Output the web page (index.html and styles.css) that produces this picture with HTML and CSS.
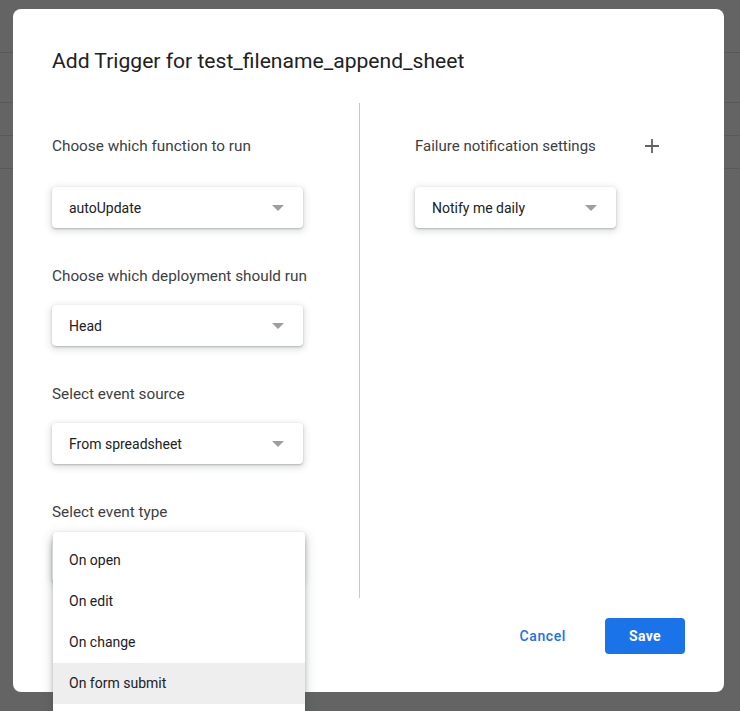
FILE: index.html
```html
<!DOCTYPE html>
<html>
<head>
<meta charset="utf-8">
<link rel="stylesheet" href="styles.css">
</head>
<body>
<div class="page">
  <div class="dialog">
    <h1 class="title">Add Trigger for test_filename_append_sheet</h1>
    <div class="body">
      <div class="col col-left">
        <div class="label-row first">Choose which function to run</div>
        <div class="select wide"><span>autoUpdate</span><i class="arrow"></i></div>
        <div class="label">Choose which deployment should run</div>
        <div class="select wide"><span>Head</span><i class="arrow"></i></div>
        <div class="label">Select event source</div>
        <div class="select wide"><span>From spreadsheet</span><i class="arrow"></i></div>
        <div class="label">Select event type</div>
        <div class="select-wrap">
          <div class="select wide"><span></span><i class="arrow"></i></div>
          <ul class="menu">
            <li>On open</li>
            <li>On edit</li>
            <li>On change</li>
            <li class="active">On form submit</li>
          </ul>
        </div>
      </div>
      <div class="divider"></div>
      <div class="col col-right">
        <div class="label-row first">
          <span>Failure notification settings</span>
          <button class="icon-btn" aria-label="Add">
            <svg width="16" height="16" viewBox="0 0 16 16"><path d="M8 1v14M1 8h14" stroke="#5f6368" stroke-width="1.8" fill="none"/></svg>
          </button>
        </div>
        <div class="select narrow"><span>Notify me daily</span><i class="arrow"></i></div>
      </div>
    </div>
    <div class="actions">
      <button class="btn-text">Cancel</button>
      <button class="btn-primary">Save</button>
    </div>
  </div>
</div>
</body>
</html>
```
FILE: styles.css
```css
html, body {
  margin: 0;
  padding: 0;
}
body {
  width: 740px;
  height: 711px;
  overflow: hidden;
  background-color: #646464;
  background-image:
    linear-gradient(#585858, #585858),
    linear-gradient(#585858, #585858),
    linear-gradient(#585858, #585858),
    linear-gradient(#585858, #585858);
  background-size: 100% 1px;
  background-repeat: no-repeat;
  background-position: 0 52px, 0 102px, 0 135px, 0 168px;
  font-family: Roboto, "Liberation Sans", sans-serif;
}
.page {
  padding: 9px 0 0 13px;
}
.dialog {
  position: relative;
  width: 711px;
  height: 683px;
  box-sizing: border-box;
  background: #fff;
  border-radius: 8px;
  padding: 38px 39px 0 39px;
}
.title {
  margin: 0;
  font-size: 21.1px;
  line-height: 28px;
  font-weight: 400;
  color: #202124;
}
.body {
  display: flex;
  margin-top: 28px;
  height: 495px;
}
.col-left {
  width: 307px;
}
.divider {
  width: 1px;
  background: #c8c8c8;
}
.col-right {
  padding-left: 55px;
}
.label-row {
  display: flex;
  align-items: center;
  height: 48px;
  margin-top: 19px;
  margin-bottom: 17px;
  font-size: 15.3px;
  color: #3c4043;
}
.col-right .label-row {
  font-size: 15px;
}
.label {
  font-size: 15.3px;
  line-height: 20px;
  color: #3c4043;
  margin-top: 38px;
  margin-bottom: 19px;
}
.icon-btn {
  border: 0;
  background: none;
  padding: 0;
  margin-left: 48px;
  width: 16px;
  height: 16px;
  display: flex;
}
.select {
  display: flex;
  align-items: center;
  justify-content: space-between;
  height: 41px;
  box-sizing: border-box;
  padding: 0 19px 0 17px;
  border-radius: 4px;
  background: #fff;
  box-shadow: 0 1px 2px 0 rgba(60,64,67,.3), 0 2px 6px 2px rgba(60,64,67,.15);
  font-size: 14px;
  color: #202124;
}
.select.wide { width: 251px; }
.select.narrow { width: 201px; }
.arrow {
  width: 0;
  height: 0;
  border-left: 6px solid transparent;
  border-right: 6px solid transparent;
  border-top: 6px solid #9e9e9e;
}
.select-wrap {
  position: relative;
}
.menu {
  position: absolute;
  left: 1px;
  top: -9px;
  width: 252px;
  margin: 0;
  padding: 8px 0 20px;
  list-style: none;
  background: #fff;
  border-radius: 4px;
  box-shadow: 0 2px 4px 0 rgba(60,64,67,.3), 0 4px 10px 3px rgba(60,64,67,.15);
  z-index: 5;
}
.menu li {
  height: 41px;
  line-height: 41px;
  padding-left: 16px;
  font-size: 14px;
  color: #202124;
}
.menu li.active {
  background: #eeeeee;
}
.actions {
  display: flex;
  justify-content: flex-end;
  align-items: center;
  gap: 15px;
  margin-top: 20px;
}
.btn-text {
  border: 0;
  background: none;
  font-family: inherit;
  font-size: 14px;
  font-weight: 500;
  letter-spacing: 0.6px;
  color: #1a73e8;
  padding: 0 24px;
  height: 36px;
}
.btn-primary {
  border: 0;
  width: 80px;
  height: 36px;
  border-radius: 4px;
  background: #1a73e8;
  color: #fff;
  font-family: inherit;
  font-size: 14px;
  font-weight: 700;
  letter-spacing: 0.3px;
}
```
